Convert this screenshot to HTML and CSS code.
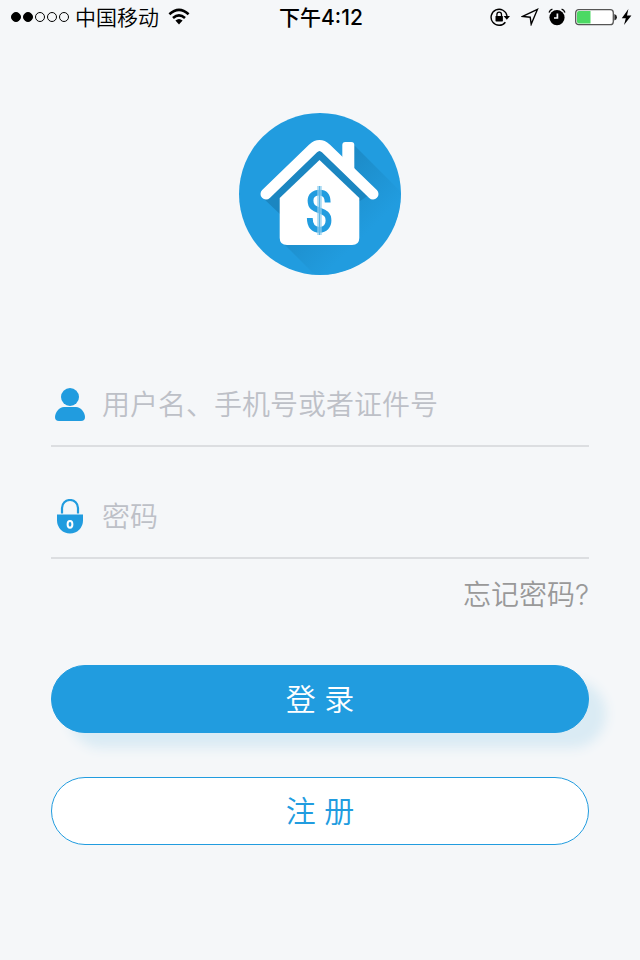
FILE: index.html
```html
<!DOCTYPE html>
<html lang="zh-CN">
<head>
<meta charset="utf-8">
<meta name="viewport" content="width=device-width, initial-scale=1">
<title>登录</title>
<link rel="stylesheet" href="styles.css">
</head>
<body>
<header class="status">
  <div class="status-side">
    <svg width="60" height="12" viewBox="0 0 60 12" aria-hidden="true">
      <g stroke="#000"><circle cx="6" cy="6" r="4.5"/><circle cx="18" cy="6" r="4.5"/>
      <g fill="none"><circle cx="30" cy="6" r="4.5"/><circle cx="42" cy="6" r="4.5"/><circle cx="54" cy="6" r="4.5"/></g></g>
    </svg>
    <span class="carrier">中国移动</span>
    <svg width="22" height="18" viewBox="0 0 22 18" aria-hidden="true">
      <g fill="none" stroke="#000" stroke-width="2.6"><path d="M1.4 6.2Q11-2.6 20.6 6.2"/><path d="M5 10Q11 4.6 17 10"/></g>
      <path d="M7.4 12.6Q11 9.6 14.6 12.6L11 16.4Z"/>
    </svg>
  </div>
  <time class="clock">下午4:12</time>
  <div class="status-side status-right">
    <svg width="20" height="20" viewBox="0 0 20 20" aria-hidden="true">
      <path d="M15.4 15.2A8 8 0 1 1 17 9" fill="none" stroke="#000" stroke-width="1.4"/>
      <path d="M13.6 9H20L16.8 12.8Z"/>
      <rect x="5.5" y="9" width="7.4" height="5.4" rx=".6"/>
      <path d="M6.9 9V7.4a2.3 2.3 0 0 1 4.6 0V9" fill="none" stroke="#000" stroke-width="1.3"/>
    </svg>
    <svg class="gap-l" width="18" height="18" viewBox="0 0 18 18" aria-hidden="true">
      <path d="M1.6 8.4L16.4 1.4L10.2 16.2L9.2 9.2Z" fill="none" stroke="#000" stroke-width="1.4" stroke-linejoin="miter"/>
    </svg>
    <svg class="gap-m" width="18" height="18" viewBox="0 0 18 18" aria-hidden="true">
      <circle cx="9" cy="9.6" r="7.6"/>
      <path d="M1 4.400Q2 2 4.400 1.200M17 4.400Q16 2 13.600 1.200" fill="none" stroke="#000" stroke-width="1.3"/>
      <path d="M9.4 5.4V10H6" fill="none" stroke="#f5f7f9" stroke-width="1.7"/>
    </svg>
    <svg class="gap-m" width="42" height="18" viewBox="0 0 42 18" aria-hidden="true">
      <rect x=".7" y="1.7" width="37.6" height="15" rx="3" fill="#fff" stroke="#555" stroke-width="1.3"/>
      <path d="M4 3H15.500V15.500H4Q2 15.500 2 13.500V5Q2 3 4 3Z" fill="#4cd964"/>
      <path d="M39.4 6Q42 7 42 9.2T39.4 12.4Z" fill="#222"/>
    </svg>
    <svg class="gap-s" width="11" height="18" viewBox="0 0 11 18" aria-hidden="true">
      <path d="M7.4 1L.8 10.2H4.8L3 17L10.4 7.6H6Z"/>
    </svg>
  </div>
</header>

<main class="login">
  <svg class="logo" width="162" height="162" viewBox="0 0 162 162" role="img" aria-label="房屋贷款">
    <defs>
      <clipPath id="disc"><circle cx="81" cy="81" r="80.5"/></clipPath>
      <linearGradient id="shade" gradientUnits="userSpaceOnUse" x1="74" y1="74" x2="124" y2="124">
        <stop offset="0" stop-color="#1c8ac6"/><stop offset="1" stop-color="#219cdf"/>
      </linearGradient>
    </defs>
    <circle cx="81" cy="81" r="81" fill="#219cdf"/>
    <g clip-path="url(#disc)">
      <path d="M114 31L176 93L92 178L43 129Z" fill="url(#shade)"/>
    </g>
    <path d="M24 85L42 102L60 80L80.500 54L110 82L121 88L130 82L80 34Z" fill="#1b86c1"/>
    <path d="M80.500 47L120.300 85V125Q120.300 132 113 132H48Q40.700 132 40.700 125V85Z" fill="#fff"/>
    <path d="M27 81L74 35.500Q80.500 29.500 87 35.500L134 81" fill="none" stroke="#fff" stroke-width="11" stroke-linecap="round"/>
    <path d="M103.300 50V32Q103.300 29 106.300 29H112.300Q115.300 29 115.300 32V62Z" fill="#fff"/>
    <path d="M88.700 89.500C88.700 83 86 79.700 80.500 79.700C75 79.700 71.500 83 71.500 87.500C71.500 94 75 95.500 80.500 97.500C86 99.500 89.500 101 89.500 107.500C89.500 113 86 116.800 80.500 116.800C74.500 116.800 70.800 113 70.800 105" fill="none" stroke="#219cdf" stroke-width="5.800"/>
    <path d="M80.500 73V122" stroke="#8fcdee" stroke-opacity=".75" stroke-width="4.600"/>
    <path d="M80.500 73V122" stroke="#5cb5e7" stroke-width="1"/>
  </svg>

  <form class="form">
    <div class="field">
      <label for="account" aria-label="用户名">
        <svg width="38" height="38" viewBox="0 0 38 38" aria-hidden="true" fill="#219cdf">
          <circle cx="19" cy="10" r="9"/>
          <path d="M13 20H25C30 20 34 26 34 30Q34 34 30 34H8Q4 34 4 30C4 26 8 20 13 20Z"/>
        </svg>
      </label>
      <input id="account" type="text" placeholder="用户名、手机号或者证件号">
    </div>
    <div class="field">
      <label for="password" aria-label="密码">
        <svg width="38" height="38" viewBox="0 0 38 38" aria-hidden="true">
          <path d="M11 14.500V9A8 8 0 0 1 27 9V14.500" fill="none" stroke="#219cdf" stroke-width="2.200"/>
          <path d="M6 15.500H32V21.500A13 13 0 0 1 6 21.500Z" fill="#219cdf"/>
          <ellipse cx="19" cy="25.300" rx="2.400" ry="3.400" fill="none" stroke="#fff" stroke-width="2"/>
        </svg>
      </label>
      <input id="password" type="password" placeholder="密码">
    </div>
    <a class="forgot" href="#">忘记密码?</a>
    <button class="btn btn-primary" type="submit">登 录</button>
    <button class="btn btn-outline" type="button">注 册</button>
  </form>
</main>
</body>
</html>
```
FILE: styles.css
```css
* {
  box-sizing: border-box;
}

body {
  margin: 0;
  min-height: 100vh;
  background: #f5f7f9;
  color: #000;
  font-family: "Liberation Sans", "Noto Sans CJK SC", sans-serif;
}

svg {
  display: block;
  flex: none;
}

.status {
  display: grid;
  grid-template-columns: 1fr auto 1fr;
  align-items: center;
  height: 34px;
  padding: 0 8px 0 10px;
  font-size: 21px;
  line-height: 32px;
}

.status-side {
  display: flex;
  align-items: center;
}

.status-right {
  justify-content: flex-end;
}

.carrier {
  margin: 0 9px 0 5px;
  padding-top: 2px;
  font-weight: 350;
}

.clock {
  padding-top: 2px;
  font-family: Inter, "Noto Sans CJK SC", sans-serif;
  font-weight: 500;
}

.gap-s {
  margin-left: 4px;
}

.gap-m {
  margin-left: 9px;
}

.gap-l {
  margin-left: 11px;
}

.login {
  padding: 79px 51px 40px;
}

.logo {
  margin: 0 auto;
}

.form {
  display: flex;
  flex-direction: column;
  margin-top: 60px;
}

.field {
  display: flex;
  align-items: flex-end;
  height: 112px;
  border-bottom: 2px solid #dcdee1;
}

.field label {
  margin-bottom: 20px;
}

.field input {
  flex: 1;
  min-width: 0;
  height: 84px;
  margin-left: 13px;
  padding: 0;
  border: 0;
  outline: 0;
  background: transparent;
  color: #333;
  font: 350 28px "Noto Sans CJK SC", sans-serif;
}

.field input::placeholder {
  color: #bdc0c7;
  opacity: 1;
}

.forgot {
  align-self: flex-end;
  margin-top: 16px;
  color: #999;
  font-family: Inter, "Noto Sans CJK SC", sans-serif;
  font-size: 28px;
  font-weight: 350;
  line-height: 40px;
  text-decoration: none;
}

.btn {
  height: 68px;
  padding: 0 0 4px;
  border: 1px solid #219cdf;
  border-radius: 34px;
  font: 350 30px "Liberation Sans", "Noto Sans CJK SC", sans-serif;
}

.btn-primary {
  margin-top: 50px;
  background: #219cdf;
  box-shadow: 17px 15px 12px #daebf4;
  color: #fff;
}

.btn-outline {
  margin-top: 44px;
  background: #fff;
  color: #219cdf;
}
```
